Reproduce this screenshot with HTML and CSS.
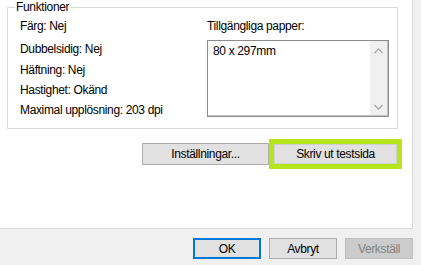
FILE: index.html
```html
<!DOCTYPE html>
<html lang="sv">
  <head>
    <meta charset="UTF-8" />
    <title>Skrivaregenskaper</title>
    <link rel="stylesheet" href="styles.css" />
  </head>
  <body>
    <div class="tab-page">
      <fieldset class="features">
        <legend>Funktioner</legend>
        <ul class="feature-list">
          <li>Färg: Nej</li>
          <li>Dubbelsidig: Nej</li>
          <li>Häftning: Nej</li>
          <li>Hastighet: Okänd</li>
          <li>Maximal upplösning: 203 dpi</li>
        </ul>
        <div class="paper">
          <div class="paper-label">Tillgängliga papper:</div>
          <div class="listbox">
            <div class="listbox-items">
              <div class="listbox-item">80 x 297mm</div>
            </div>
            <div class="scrollbar">
              <svg class="arrow" width="9" height="6" viewBox="0 0 9 6">
                <polyline points="0.5,5 4.5,1 8.5,5" />
              </svg>
              <svg class="arrow" width="9" height="6" viewBox="0 0 9 6">
                <polyline points="0.5,1 4.5,5 8.5,1" />
              </svg>
            </div>
          </div>
        </div>
      </fieldset>

      <div class="page-actions">
        <button class="btn btn-settings">Inställningar...</button>
        <div class="highlight">
          <button class="btn btn-test">Skriv ut testsida</button>
        </div>
      </div>
    </div>

    <div class="dialog-buttons">
      <button class="btn btn-dialog btn-default">OK</button>
      <button class="btn btn-dialog">Avbryt</button>
      <button class="btn btn-dialog" disabled>Verkställ</button>
    </div>
  </body>
</html>
```

FILE: styles.css
```css
* {
  margin: 0;
  padding: 0;
  box-sizing: border-box;
}

:root {
  --dialog-bg: #f0f0f0;
  --page-bg: #ffffff;
  --text: #000000;
  --line: #dcdcdc;
  --btn-bg: #e1e1e1;
  --btn-border: #adadad;
  --accent: #0078d7;
  --marker: #b5e61d;
}

body {
  width: 421px;
  height: 265px;
  overflow: hidden;
  background: var(--dialog-bg);
  color: var(--text);
  font-family: "Liberation Sans", Arial, sans-serif;
  font-size: 12px;
  letter-spacing: -0.35px;
}

/* Tab page */
.tab-page {
  width: 413px;
  height: 229px;
  background: var(--page-bg);
  border-right: 1px solid #d9d9d9;
  border-bottom: 1px solid #d9d9d9;
}

/* Group box */
.features {
  width: 391px;
  margin-left: 7px;
  padding: 1px 7px 8px 12px;
  border: 1px solid var(--line);
  display: grid;
  grid-template-columns: 187px 182px;
}

.features legend {
  margin-left: -5px;
  padding: 0 1px;
  line-height: 15px;
}

.feature-list {
  list-style: none;
}

.feature-list li {
  line-height: 20px;
}

.feature-list li:first-child {
  margin-bottom: 3px;
}

.feature-list li:nth-child(2) {
  margin-bottom: 1px;
}

.paper-label {
  line-height: 20px;
  margin-bottom: 4px;
}

.listbox {
  height: 77px;
  display: flex;
  border: 1px solid #8c8c8c;
  box-shadow: inset -1px -1px 0 #c4c4c4;
}

.listbox-items {
  flex: 1;
  padding: 2px 5px;
}

.listbox-item {
  line-height: 16px;
}

.scrollbar {
  width: 17px;
  margin: 0 1px 1px 0;
  background: var(--dialog-bg);
  display: flex;
  flex-direction: column;
  justify-content: space-between;
  align-items: center;
  padding: 7px 0 5px;
}

.arrow polyline {
  fill: none;
  stroke: #a6a6a6;
  stroke-width: 1.3;
}

/* Buttons */
.btn {
  font: inherit;
  letter-spacing: inherit;
  color: var(--text);
  background: var(--btn-bg);
  border: 1px solid var(--btn-border);
  height: 22px;
  cursor: pointer;
}

.page-actions {
  display: flex;
  justify-content: flex-end;
  align-items: center;
  margin-top: 10px;
  padding-right: 10px;
}

.btn-settings {
  width: 127px;
}

.highlight {
  border: 5px solid var(--marker);
}

.btn-test {
  display: block;
  width: 123px;
  height: 20px;
  border-color: #d0d0d0;
}

.dialog-buttons {
  display: flex;
  justify-content: flex-end;
  gap: 8px;
  margin-top: 9px;
  padding-right: 8px;
}

.btn-dialog {
  width: 68px;
  height: 21px;
}

.btn-default {
  border-color: var(--accent);
  box-shadow: inset 0 0 0 1px var(--accent);
}

.btn-dialog[disabled] {
  background: #cccccc;
  border-color: #bfbfbf;
  color: #838383;
  cursor: default;
}
```
